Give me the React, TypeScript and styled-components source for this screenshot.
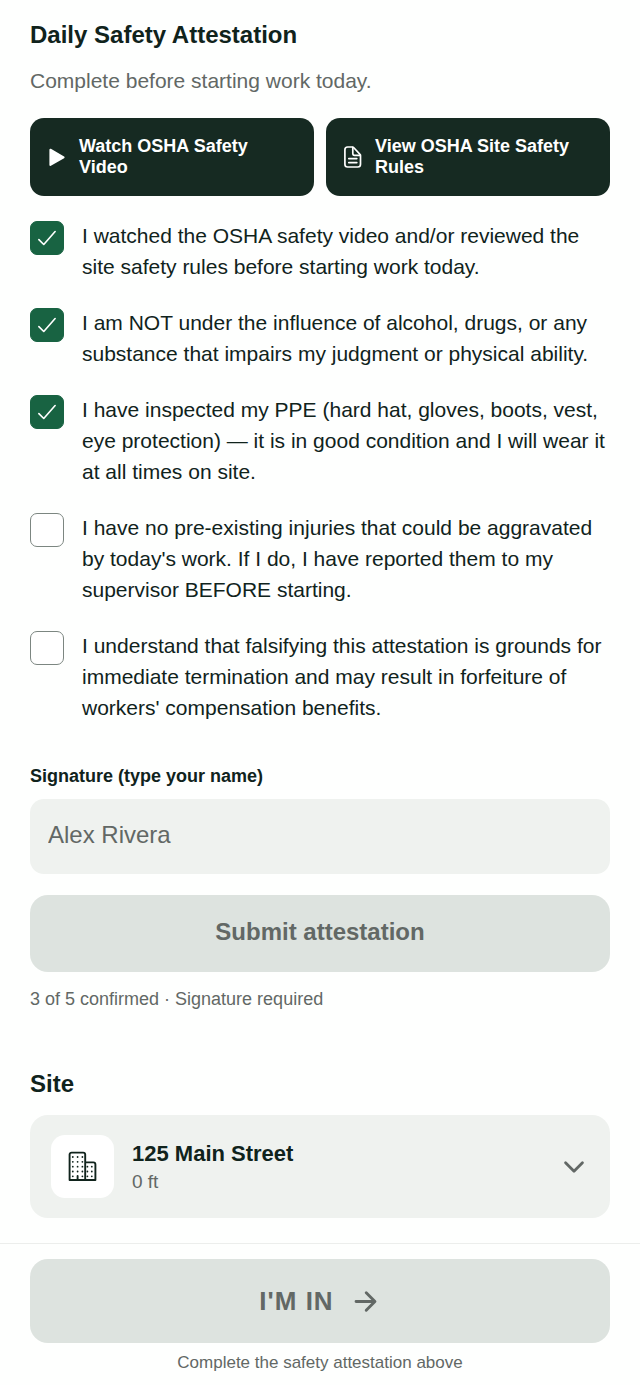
import React, { useState } from "react";
import styled, { createGlobalStyle } from "styled-components";
import { IoArrowForward, IoCheckmarkOutline, IoChevronDown } from "react-icons/io5";

const ink = "#10231c";
const muted = "#626865";
const panel = "#eff2ef";
const disabled = "#dde3df";

const GlobalStyle = createGlobalStyle`
  *, *::before, *::after { box-sizing: border-box; }
  body {
    margin: 0;
    background: #fefffe;
    color: ${ink};
    font-family: "Liberation Sans", Arial, sans-serif;
  }
  button, input { font: inherit; color: inherit; }
`;

const Page = styled.div`
  display: flex;
  flex-direction: column;
  min-height: 100vh;
`;

const Content = styled.main`
  display: flex;
  flex-direction: column;
  flex: 1;
  padding: 20px 30px 25px;
`;

const Heading = styled.h2`
  margin: 0;
  font-size: 24px;
  line-height: 30px;
  font-weight: 700;
`;

const Intro = styled.p`
  margin: 16px 0 22px;
  font-size: 21px;
  line-height: 30px;
  color: ${muted};
`;

const Resources = styled.div`
  display: grid;
  grid-template-columns: 1fr 1fr;
  gap: 12px;
`;

const ResourceButton = styled.button`
  display: flex;
  align-items: center;
  gap: 10px;
  min-height: 78px;
  padding: 16px 15px;
  border: 0;
  border-radius: 14px;
  background: #162a22;
  color: #fff;
  font-size: 18px;
  line-height: 21px;
  font-weight: 700;
  text-align: left;
  cursor: pointer;

  svg { flex: none; }
`;

const Checklist = styled.ul`
  display: flex;
  flex-direction: column;
  gap: 25px;
  margin: 24px 0 41px;
  padding: 0;
  list-style: none;
`;

const CheckRow = styled.label`
  display: flex;
  align-items: flex-start;
  gap: 18px;
  font-size: 21px;
  line-height: 31px;
  cursor: pointer;
`;

const CheckControl = styled.span`
  display: grid;
  flex: none;
  margin-top: 1px;
  place-items: center;

  > * { grid-area: 1 / 1; }
  svg { color: #fff; pointer-events: none; }
`;

const CheckInput = styled.input`
  appearance: none;
  width: 34px;
  height: 34px;
  margin: 0;
  border: 1px solid #7c8681;
  border-radius: 7px;
  background: #fff;
  cursor: pointer;

  &:checked {
    border-color: #186342;
    background: #186342;
  }
`;

const FieldLabel = styled.label`
  font-size: 18px;
  line-height: 24px;
  font-weight: 700;
`;

const TextField = styled.input`
  width: 100%;
  height: 75px;
  margin: 11px 0 21px;
  padding: 0 18px 4px;
  border: 0;
  border-radius: 14px;
  background: ${panel};
  font-size: 24px;

  &::placeholder { color: ${muted}; opacity: 1; }
`;

const SubmitButton = styled.button`
  height: 77px;
  padding: 0 18px 4px;
  border: 0;
  border-radius: 18px;
  background: ${disabled};
  color: ${muted};
  font-size: 24px;
  font-weight: 700;
`;

const Status = styled.p`
  margin: 16px 0 59px;
  font-size: 18px;
  line-height: 22px;
  color: ${muted};
`;

const SiteButton = styled.button`
  display: flex;
  align-items: center;
  gap: 18px;
  margin-top: 16px;
  padding: 20px 21px;
  border: 0;
  border-radius: 18px;
  background: ${panel};
  text-align: left;
  cursor: pointer;
`;

const SiteIcon = styled.span`
  display: grid;
  flex: none;
  place-items: center;
  width: 63px;
  height: 63px;
  border-radius: 14px;
  background: #fff;
`;

const SiteText = styled.span`
  display: flex;
  flex: 1;
  flex-direction: column;
`;

const SiteName = styled.span`
  font-size: 22px;
  line-height: 30px;
  font-weight: 700;
`;

const SiteDistance = styled.span`
  font-size: 19px;
  line-height: 26px;
  color: ${muted};
`;

const Footer = styled.footer`
  display: flex;
  flex-direction: column;
  padding: 15px 30px 11px;
  border-top: 1px solid #eceeec;
`;

const ClockInButton = styled.button`
  display: flex;
  align-items: center;
  justify-content: center;
  gap: 16px;
  height: 84px;
  border: 0;
  border-radius: 18px;
  background: ${disabled};
  color: ${muted};
  font-size: 26px;
  font-weight: 700;
  letter-spacing: 1px;
`;

const FooterNote = styled.p`
  margin: 9px 0 0;
  font-size: 17px;
  line-height: 22px;
  color: ${muted};
  text-align: center;
`;

const PlayIcon = () => (
  <svg width="24" height="24" viewBox="0 0 24 24" aria-hidden>
    <path
      d="M5.4 4.7v15.2L18.6 12.3z"
      fill="currentColor"
      stroke="currentColor"
      strokeWidth="2"
      strokeLinejoin="round"
    />
  </svg>
);

const DocumentIcon = () => (
  <svg
    width="24"
    height="24"
    viewBox="0 0 24 24"
    fill="none"
    stroke="currentColor"
    strokeWidth="1.7"
    strokeLinecap="round"
    strokeLinejoin="round"
    aria-hidden
  >
    <path d="M11.4 2H6.6A2.7 2.7 0 0 0 3.9 4.7v14.6A2.7 2.7 0 0 0 6.6 22h10.2a2.7 2.7 0 0 0 2.7-2.7v-8.8c0-.5-.2-.9-.5-1.2l-6.4-6.8c-.3-.3-.7-.5-1.2-.5z" />
    <path d="M11.8 2.4v6.2c0 1 .8 1.7 1.7 1.7h5.7M7.8 13.6h8M7.8 17.6h8" />
  </svg>
);

const buildingDots = [
  ...[5.8, 10.6, 15.4].flatMap((x) => [6, 10.8, 15.7, 20.5].map((y) => [x, y])),
  ...[5.8, 15.4].map((x) => [x, 25.3]),
  ...[20.4, 24.8].flatMap((x) => [15.7, 20.5, 25.3].map((y) => [x, y])),
];

const BuildingIcon = () => (
  <svg width="31" height="31" viewBox="0 0 31 31" aria-hidden>
    <path
      d="M2.6 29V3.6c0-1.1.9-2 2-2h11.6c1.1 0 2 .9 2 2V29zM18.2 11.4h8.2c1.1 0 2 .9 2 2V29H18.2M10.6 25v4"
      fill="none"
      stroke="currentColor"
      strokeWidth="1.9"
      strokeLinecap="round"
      strokeLinejoin="round"
    />
    {buildingDots.map(([x, y]) => (
      <circle key={`${x}-${y}`} cx={x} cy={y} r="0.9" fill="currentColor" />
    ))}
  </svg>
);

const statements = [
  "I watched the OSHA safety video and/or reviewed the site safety rules before starting work today.",
  "I am NOT under the influence of alcohol, drugs, or any substance that impairs my judgment or physical ability.",
  "I have inspected my PPE (hard hat, gloves, boots, vest, eye protection) — it is in good condition and I will wear it at all times on site.",
  "I have no pre-existing injuries that could be aggravated by today's work. If I do, I have reported them to my supervisor BEFORE starting.",
  "I understand that falsifying this attestation is grounds for immediate termination and may result in forfeiture of workers' compensation benefits.",
];

export default function App() {
  const [checked, setChecked] = useState([true, true, true, false, false]);
  const [signature, setSignature] = useState("");
  const confirmed = checked.filter(Boolean).length;
  const ready = confirmed === statements.length && signature.trim() !== "";

  const toggle = (index: number) =>
    setChecked((current) => current.map((value, i) => (i === index ? !value : value)));

  return (
    <Page>
      <GlobalStyle />
      <Content>
        <Heading>Daily Safety Attestation</Heading>
        <Intro>Complete before starting work today.</Intro>
        <Resources>
          <ResourceButton type="button">
            <PlayIcon />
            <span>Watch OSHA Safety Video</span>
          </ResourceButton>
          <ResourceButton type="button">
            <DocumentIcon />
            <span>View OSHA Site Safety Rules</span>
          </ResourceButton>
        </Resources>
        <Checklist>
          {statements.map((text, index) => (
            <li key={text}>
              <CheckRow>
                <CheckControl>
                  <CheckInput
                    type="checkbox"
                    checked={checked[index]}
                    onChange={() => toggle(index)}
                  />
                  {checked[index] && <IoCheckmarkOutline size={26} aria-hidden />}
                </CheckControl>
                <span>{text}</span>
              </CheckRow>
            </li>
          ))}
        </Checklist>
        <FieldLabel htmlFor="signature">Signature (type your name)</FieldLabel>
        <TextField
          id="signature"
          type="text"
          placeholder="Alex Rivera"
          value={signature}
          onChange={(event) => setSignature(event.target.value)}
        />
        <SubmitButton type="button" disabled={!ready}>
          Submit attestation
        </SubmitButton>
        <Status>
          {`${confirmed} of ${statements.length} confirmed${signature.trim() ? "" : " · Signature required"}`}
        </Status>
        <Heading>Site</Heading>
        <SiteButton type="button">
          <SiteIcon>
            <BuildingIcon />
          </SiteIcon>
          <SiteText>
            <SiteName>125 Main Street</SiteName>
            <SiteDistance>0 ft</SiteDistance>
          </SiteText>
          <IoChevronDown size={30} color={muted} aria-hidden />
        </SiteButton>
      </Content>
      <Footer>
        <ClockInButton type="button" disabled>
          I'M IN
          <IoArrowForward size={31} aria-hidden />
        </ClockInButton>
        <FooterNote>Complete the safety attestation above</FooterNote>
      </Footer>
    </Page>
  );
}
